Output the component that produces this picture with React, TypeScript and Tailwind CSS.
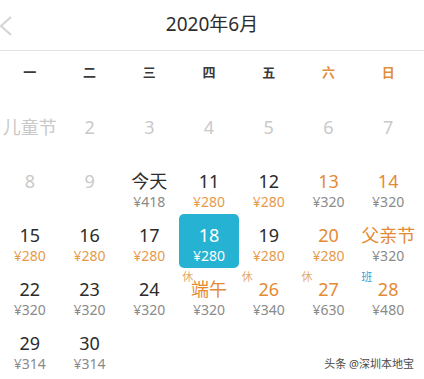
import React from 'react';

type Day = {
    label: string;
    price?: string;
    tone: 'off' | 'dark' | 'hot';
    cheap?: boolean;
    tag?: '休' | '班';
    selected?: boolean;
};

const weekdays = ['一', '二', '三', '四', '五', '六', '日'];

const rows: (Day | null)[][] = [
    [
        { label: '儿童节', tone: 'off' },
        { label: '2', tone: 'off' },
        { label: '3', tone: 'off' },
        { label: '4', tone: 'off' },
        { label: '5', tone: 'off' },
        { label: '6', tone: 'off' },
        { label: '7', tone: 'off' },
    ],
    [
        { label: '8', tone: 'off' },
        { label: '9', tone: 'off' },
        { label: '今天', price: '¥418', tone: 'dark' },
        { label: '11', price: '¥280', tone: 'dark', cheap: true },
        { label: '12', price: '¥280', tone: 'dark', cheap: true },
        { label: '13', price: '¥320', tone: 'hot' },
        { label: '14', price: '¥320', tone: 'hot' },
    ],
    [
        { label: '15', price: '¥280', tone: 'dark', cheap: true },
        { label: '16', price: '¥280', tone: 'dark', cheap: true },
        { label: '17', price: '¥280', tone: 'dark', cheap: true },
        { label: '18', price: '¥280', tone: 'dark', selected: true },
        { label: '19', price: '¥280', tone: 'dark', cheap: true },
        { label: '20', price: '¥280', tone: 'hot', cheap: true },
        { label: '父亲节', price: '¥320', tone: 'hot' },
    ],
    [
        { label: '22', price: '¥320', tone: 'dark' },
        { label: '23', price: '¥320', tone: 'dark' },
        { label: '24', price: '¥320', tone: 'dark' },
        { label: '端午', price: '¥320', tone: 'hot', tag: '休' },
        { label: '26', price: '¥340', tone: 'hot', tag: '休' },
        { label: '27', price: '¥630', tone: 'hot', tag: '休' },
        { label: '28', price: '¥480', tone: 'hot', tag: '班' },
    ],
    [
        { label: '29', price: '¥314', tone: 'dark' },
        { label: '30', price: '¥314', tone: 'dark' },
        null,
        null,
        null,
        null,
        null,
    ],
];

const DayCell = ({ day }: { day: Day | null }) => {
    if (!day) return <div className="h-[54px]" />;

    const numColor = day.selected
        ? 'text-white'
        : day.tone === 'off'
          ? 'text-[#c9c9c9]'
          : day.tone === 'hot'
            ? 'text-[#e48a35]'
            : 'text-[#2b2b2b]';
    const priceColor = day.selected ? 'text-white' : day.cheap ? 'text-[#e69a4c]' : 'text-[#8a8a8a]';

    return (
        <div
            className={`relative h-[54px] flex flex-col items-center pt-[10px] ${
                day.selected ? 'bg-[#25b2d3] rounded-[5px]' : ''
            }`}
        >
            {day.tag && (
                <span
                    className={`absolute left-[3px] top-[2px] text-[11px] leading-[13px] ${
                        day.tag === '班' ? 'text-[#3d9fd6]' : 'text-[#e4ab6c]'
                    }`}
                >
                    {day.tag}
                </span>
            )}
            <div className={`text-[18px] leading-[22px] whitespace-nowrap ${numColor}`}>{day.label}</div>
            {day.price && <div className={`text-[14px] leading-[20px] ${priceColor}`}>{day.price}</div>}
        </div>
    );
};

export default function App() {
    return (
        <div
            className="relative w-[424px] h-[379px] bg-white overflow-hidden"
            style={{ fontFamily: '"Noto Sans", "Noto Sans CJK SC", sans-serif' }}
        >
            <div className="relative h-[51px] border-b border-[#e3e3e3] flex items-center justify-center">
                <svg className="absolute left-[-2px] top-[16px]" width="16" height="20" viewBox="0 0 16 20">
                    <path d="M13 1 L3 10 L13 19" fill="none" stroke="#d4d4d4" strokeWidth="2.2" />
                </svg>
                <span className="text-[19px] text-[#2e2e2e] leading-[24px] -mt-[2px]">2020年6月</span>
            </div>

            <div className="grid grid-cols-7 w-[418px] h-[55px]">
                {weekdays.map((w, i) => (
                    <div
                        key={w}
                        className={`text-center text-[13px] font-bold leading-[42px] ${
                            i >= 5 ? 'text-[#e28d3a]' : 'text-[#3a3a3a]'
                        }`}
                    >
                        {w}
                    </div>
                ))}
            </div>

            <div className="grid grid-cols-7 w-[418px]">
                {rows.flat().map((d, i) => (
                    <DayCell key={i} day={d} />
                ))}
            </div>

            <div
                className="absolute right-[10px] bottom-[7px] text-[11px] leading-[16px] text-[#4a4a4a]"
                style={{ textShadow: '0 0 2px #fff, 0 0 2px #fff' }}
            >
                头条 @深圳本地宝
            </div>
        </div>
    );
}
